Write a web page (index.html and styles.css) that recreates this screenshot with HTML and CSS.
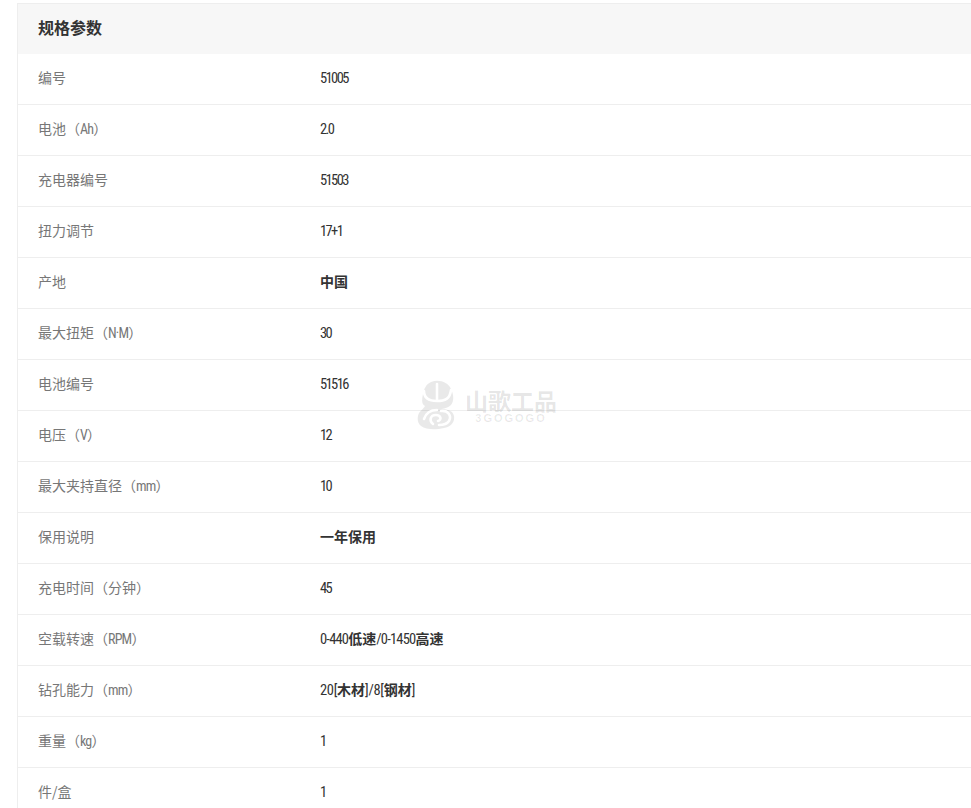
FILE: index.html
```html
<!DOCTYPE html>
<html lang="zh-CN">
<head>
<meta charset="utf-8">
<title>规格参数</title>
<link rel="stylesheet" href="styles.css">
</head>
<body>
<section class="specs">
  <h2 class="specs-title">规格参数</h2>
  <dl class="specs-list">
    <div class="row"><dt>编号</dt><dd><span class="n">51005</span></dd></div>
    <div class="row"><dt>电池（<span class="l">Ah</span>）</dt><dd><span class="n">2.0</span></dd></div>
    <div class="row"><dt>充电器编号</dt><dd><span class="n">51503</span></dd></div>
    <div class="row"><dt>扭力调节</dt><dd><span class="n">17+1</span></dd></div>
    <div class="row"><dt>产地</dt><dd>中国</dd></div>
    <div class="row"><dt>最大扭矩（<span class="l">N·M</span>）</dt><dd><span class="n">30</span></dd></div>
    <div class="row"><dt>电池编号</dt><dd><span class="n">51516</span></dd></div>
    <div class="row"><dt>电压（<span class="l">V</span>）</dt><dd><span class="n">12</span></dd></div>
    <div class="row"><dt>最大夹持直径（<span class="l">mm</span>）</dt><dd><span class="n">10</span></dd></div>
    <div class="row"><dt>保用说明</dt><dd>一年保用</dd></div>
    <div class="row"><dt>充电时间（分钟）</dt><dd><span class="n">45</span></dd></div>
    <div class="row"><dt>空载转速（<span class="l">RPM</span>）</dt><dd><span class="n wide">0-440</span>低速<span class="n wide">/0-1450</span>高速</dd></div>
    <div class="row"><dt>钻孔能力（<span class="l">mm</span>）</dt><dd><span class="n wider">20[</span>木材<span class="n wider">]/8[</span>钢材<span class="n wider">]</span></dd></div>
    <div class="row"><dt>重量（<span class="l">kg</span>）</dt><dd><span class="n">1</span></dd></div>
    <div class="row"><dt>件/盒</dt><dd><span class="n">1</span></dd></div>
  </dl>
</section>
<div class="mark">
  <svg class="mark-icon" width="39" height="50" viewBox="0 0 39 50" aria-hidden="true">
    <path fill="#000" fill-opacity="0.085" d="M14 2 C22 -1 31 2 34 9 C37 15 37 21 34 25 C31 28 28 28 25 29 C31 29 36 31 37 36 C38 42 34 47 27 48 C19 50 9 50 4 46 C0 43 0 37 2 33 C4 30 7 28 8 26 C4 24 5 19 6 14 C7 9 9 4 14 2 Z"/>
    <g fill="none" stroke="#fff" stroke-width="2.6" stroke-linecap="round" stroke-linejoin="round">
      <path d="M20 4 V20"/>
      <path d="M7 11 C7 18 11 21 20 21 C28 21 33 19 34 10"/>
      <path d="M7 39 C9 33 13 30 20 30"/>
      <path d="M16 44 C12 41 13 35 19 35 C24 35 25 40 21 41"/>
      <path d="M24 31 C31 30 35 36 32 41 C30 44 26 45 22 45"/>
    </g>
  </svg>
  <div class="mark-text">
    <span class="mark-cn">山歌工品</span>
    <span class="mark-en">3GOGOGO</span>
  </div>
</div>
</body>
</html>
```
FILE: styles.css
```css
html, body {
  margin: 0;
  padding: 0;
  height: 808px;
  overflow: hidden;
  background: #fff;
}
body {
  position: relative;
  padding: 3px 0 0 17px;
  box-sizing: border-box;
  font-family: "Noto Sans CJK SC", sans-serif;
}
.specs {
  width: 980px;
  border-left: 1px solid #eee;
  border-top: 1px solid #eee;
}
.specs-title {
  margin: 0;
  height: 50px;
  padding-left: 20px;
  background: #f7f7f7;
  font-size: 16px;
  font-weight: 700;
  line-height: 47px;
  color: #333;
}
.specs-list {
  margin: 0;
}
.row {
  display: flex;
  height: 45px;
  padding-bottom: 5px;
  border-bottom: 1px solid #eee;
  align-items: center;
  font-size: 14px;
}
.row dt {
  width: 302px;
  padding-left: 20px;
  box-sizing: border-box;
  color: #777;
  font-weight: 400;
}
.row dd {
  margin: 0;
  font-weight: 700;
  color: #333;
}
.n, .l {
  font-family: "Roboto Condensed", Roboto, sans-serif;
  font-stretch: 75%;
}
.n {
  font-size: 14.5px;
  font-weight: 400;
  letter-spacing: -1.6px;
}
.n.wide {
  letter-spacing: -0.8px;
}
.n.wider {
  letter-spacing: -0.3px;
}
.l {
  font-size: 14px;
  letter-spacing: -0.8px;
}
.mark {
  position: absolute;
  left: 417px;
  top: 380px;
  display: flex;
  align-items: flex-start;
  gap: 9px;
}
.mark-text {
  display: flex;
  flex-direction: column;
  align-items: center;
  padding-top: 7px;
}
.mark-cn {
  font-size: 23px;
  font-weight: 700;
  line-height: 26px;
  color: rgba(0, 0, 0, 0.11);
}
.mark-en {
  font-family: "Liberation Sans", sans-serif;
  font-size: 11px;
  font-weight: 700;
  line-height: 11px;
  letter-spacing: 2px;
  color: rgba(0, 0, 0, 0.09);
}
```
